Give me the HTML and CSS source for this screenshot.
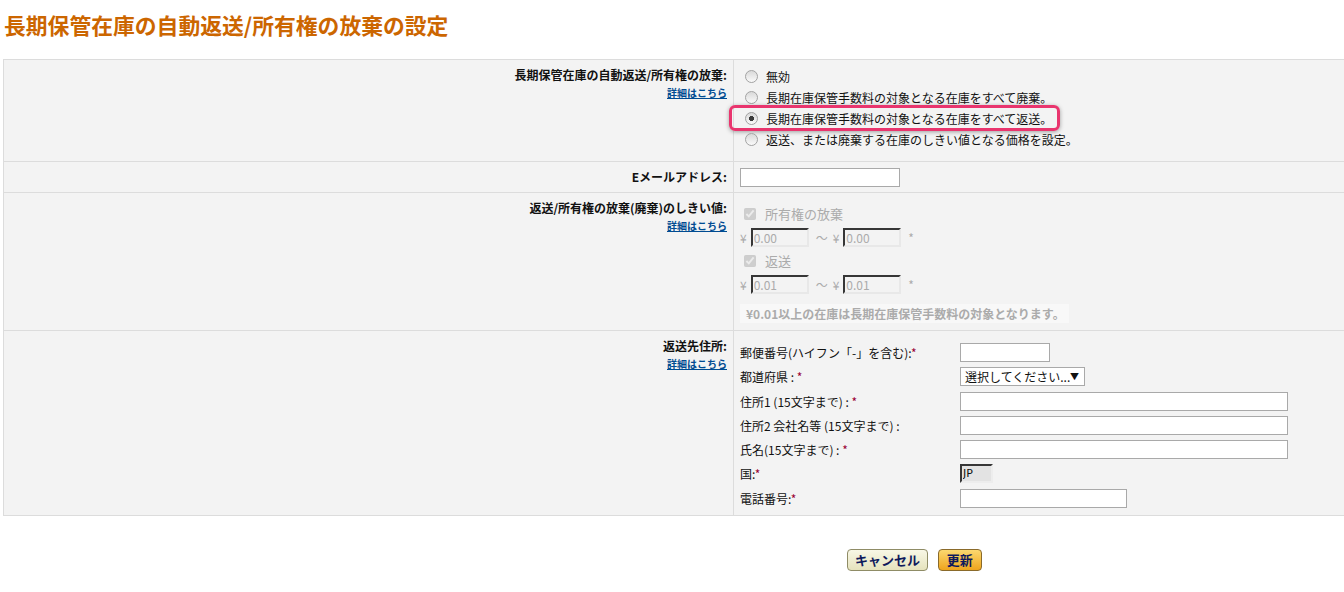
FILE: index.html
```html
<!DOCTYPE html>
<html lang="ja">
<head>
    <meta charset="UTF-8">
    <title>長期保管在庫の自動返送/所有権の放棄の設定</title>
    <link rel="stylesheet" href="styles.css">
</head>
<body>
    <h1>長期保管在庫の自動返送/所有権の放棄の設定</h1>

    <table class="ajustes">
        <tr>
            <td class="etiqueta">
                長期保管在庫の自動返送/所有権の放棄:<br>
                <a href="#" class="detalle">詳細はこちら</a>
            </td>
            <td class="valor fila-modo">
                <div class="opcion"><input type="radio" name="modo"><span>無効</span></div>
                <div class="opcion"><input type="radio" name="modo"><span>長期在庫保管手数料の対象となる在庫をすべて廃棄。</span></div>
                <div class="opcion marcada"><input type="radio" name="modo" checked><span>長期在庫保管手数料の対象となる在庫をすべて返送。</span></div>
                <div class="opcion"><input type="radio" name="modo"><span>返送、または廃棄する在庫のしきい値となる価格を設定。</span></div>
            </td>
        </tr>
        <tr>
            <td class="etiqueta">Eメールアドレス:</td>
            <td class="valor fila-email"><input type="text" class="campo-email"></td>
        </tr>
        <tr>
            <td class="etiqueta">
                返送/所有権の放棄(廃棄)のしきい値:<br>
                <a href="#" class="detalle">詳細はこちら</a>
            </td>
            <td class="valor apagado">
                <div class="casilla"><input type="checkbox" checked disabled><span>所有権の放棄</span></div>
                <div class="rango">
                    <span class="yen">¥</span><input type="text" value="0.00" disabled><span class="tilde">〜</span><span class="yen">¥</span><input type="text" value="0.00" disabled><span class="asterisco">*</span>
                </div>
                <div class="casilla"><input type="checkbox" checked disabled><span>返送</span></div>
                <div class="rango">
                    <span class="yen">¥</span><input type="text" value="0.01" disabled><span class="tilde">〜</span><span class="yen">¥</span><input type="text" value="0.01" disabled><span class="asterisco">*</span>
                </div>
                <div class="nota">¥0.01以上の在庫は長期在庫保管手数料の対象となります。</div>
            </td>
        </tr>
        <tr>
            <td class="etiqueta">
                返送先住所:<br>
                <a href="#" class="detalle">詳細はこちら</a>
            </td>
            <td class="valor">
                <div class="direccion">
                    <label>郵便番号(ハイフン「-」を含む):<span class="req">*</span></label>
                    <input type="text" class="corto">
                    <label>都道府県 : <span class="req">*</span></label>
                    <div class="selector">選択してください... <span class="flecha">▼</span></div>
                    <label>住所1 (15文字まで) : <span class="req">*</span></label>
                    <input type="text" class="largo">
                    <label>住所2 会社名等 (15文字まで) :</label>
                    <input type="text" class="largo">
                    <label>氏名(15文字まで) : <span class="req">*</span></label>
                    <input type="text" class="largo">
                    <label>国:<span class="req">*</span></label>
                    <input type="text" class="pais" value="JP" readonly>
                    <label>電話番号:<span class="req">*</span></label>
                    <input type="text" class="medio">
                </div>
            </td>
        </tr>
    </table>

    <div class="acciones">
        <button class="boton-cancelar">キャンセル</button>
        <button class="boton-actualizar">更新</button>
    </div>
</body>
</html>
```

FILE: styles.css
```css
body {
    font-family: "Noto Sans CJK JP", "Liberation Sans", sans-serif;
    font-size: 12px;
    color: #111;
    margin: 0;
    padding: 0 0 0 3px;
    background-color: white;
    overflow: hidden;
}

h1 {
    color: #cc6600;
    font-size: 21.8px;
    font-weight: bold;
    margin: 0;
    padding: 10px 0 0 1px;
    height: 48px;
    line-height: 30px;
    box-sizing: border-box;
}

/* Tabla principal */
.ajustes {
    width: 1400px;
    border-collapse: collapse;
    background-color: #f3f3f3;
    margin-top: 11px;
}

.ajustes td {
    border: 1px solid #dcdcdc;
    vertical-align: top;
}

.etiqueta {
    width: 723px;
    text-align: right;
    font-weight: bold;
    padding: 6px 6px 0 0;
    line-height: 17px;
}

.detalle {
    font-size: 10px;
    color: #004b91;
    line-height: 14px;
}

.valor {
    padding: 6px 0 7px 6px;
}

.fila-modo {
    padding-bottom: 11px;
}

.fila-email {
    padding: 6px 0 5px 6px;
}

.opcion {
    position: relative;
    height: 21px;
    line-height: 21px;
    display: flex;
    align-items: center;
}

.opcion input {
    appearance: none;
    margin: 0 8px 0 5px;
    width: 13px;
    height: 13px;
    border: 1px solid #a3a3a3;
    border-radius: 50%;
    background: linear-gradient(#d9d9d9, #fafafa);
    box-sizing: border-box;
}

.opcion input:checked {
    background: radial-gradient(circle, #3c3c3c 0 2.3px, transparent 2.8px), linear-gradient(#d9d9d9, #fafafa);
}

.marcada::before {
    content: "";
    position: absolute;
    left: -11px;
    top: -3px;
    width: 325px;
    height: 20px;
    border: 3px solid #e9356e;
    border-radius: 6px;
    box-shadow: 0 1px 4px rgba(0, 0, 0, 0.35);
}

.campo-email {
    width: 160px;
    height: 19px;
    box-sizing: border-box;
    border: 1px solid #a9a9a9;
    margin: 0;
    display: block;
}

/* Umbral desactivado */
.apagado {
    color: #ababab;
    padding-top: 9px;
}

.casilla {
    height: 23px;
    display: flex;
    align-items: center;
    font-size: 13px;
}

.casilla input {
    margin: 0 9px 0 4px;
    width: 12px;
    height: 12px;
}

.rango {
    height: 24px;
    display: flex;
    align-items: center;
}

.yen {
    margin-right: 4px;
}

.tilde {
    margin: 0 5px 0 7px;
}

.rango input {
    width: 58px;
    height: 19px;
    box-sizing: border-box;
    border: 2px inset #e8e8e8;
    border-top-color: #8a8a8a;
    border-left-color: #8a8a8a;
    background-color: #f3f3f3;
    color: #ababab;
    font-family: inherit;
    font-size: 12px;
    padding: 0 1px;
    margin: 0;
}

.asterisco {
    margin-left: 7px;
}

.nota {
    display: inline-block;
    background-color: #f8f8f8;
    font-weight: bold;
    padding: 1px 4px 1px 6px;
    margin-top: 8px;
    line-height: 17px;
}

/* Dirección de devolución */
.direccion {
    display: grid;
    grid-template-columns: 220px auto;
    row-gap: 5.3px;
    align-items: center;
    padding: 6px 0 0 0;
}

.direccion label {
    line-height: 19px;
}

.req {
    color: #990033;
}

.direccion input {
    height: 19px;
    box-sizing: border-box;
    border: 1px solid #a9a9a9;
    background-color: white;
    margin: 0;
}

.corto {
    width: 90px;
}

.largo {
    width: 328px;
}

.medio {
    width: 167px;
}

.direccion .pais {
    width: 33px;
    border: 2px inset #ededed;
    border-top-color: #8a8a8a;
    border-left-color: #8a8a8a;
    background-color: #e3e3e3;
    font-family: "DejaVu Sans", sans-serif;
    font-size: 11px;
    color: #111;
    padding: 0 0 0 1px;
}

.selector {
    width: 125px;
    height: 19px;
    box-sizing: border-box;
    border: 1px solid #a9a9a9;
    background-color: white;
    padding-left: 4px;
    line-height: 17px;
    position: relative;
}

.flecha {
    position: absolute;
    right: 5px;
    top: 0;
    font-size: 9px;
}

/* Botones */
.acciones {
    padding: 33px 0 0 844px;
}

.boton-cancelar, .boton-actualizar {
    font-family: inherit;
    font-weight: bold;
    font-size: 13px;
    color: #0f1a5c;
    height: 22px;
    border-radius: 4px;
    padding: 0;
    margin: 0;
    cursor: pointer;
    vertical-align: top;
}

.boton-cancelar {
    width: 81px;
    background: linear-gradient(#f8f7e6, #e6e3bd);
    border: 1px solid #8f8c66;
    margin-right: 7px;
}

.boton-actualizar {
    width: 44px;
    background: linear-gradient(#fbd870, #efa51d);
    border: 1px solid #8a6a2a;
}
```
